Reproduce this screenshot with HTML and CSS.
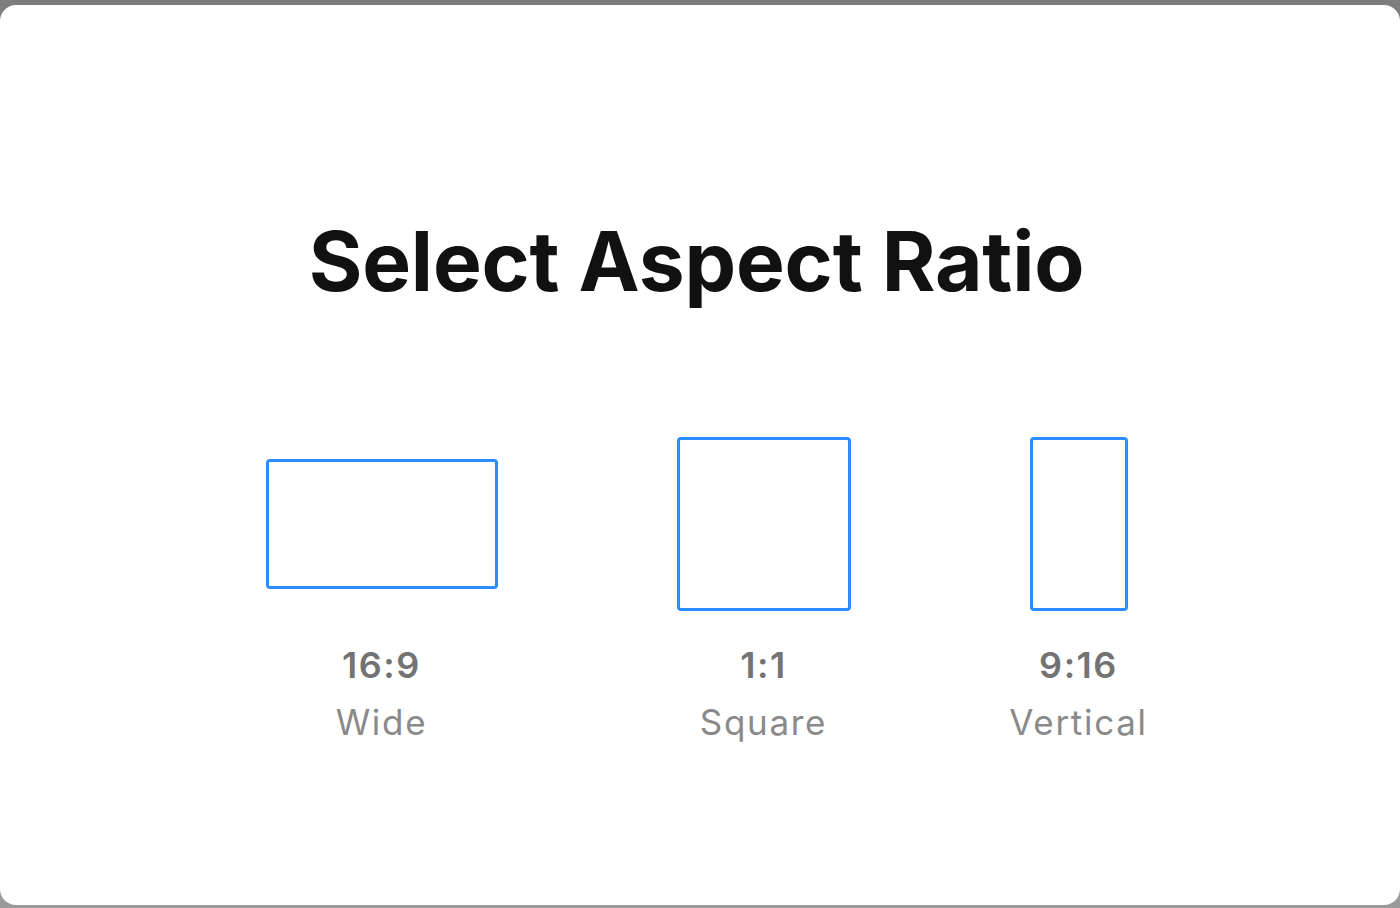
FILE: index.html
```html
<!DOCTYPE html>
<html lang="en">
<head>
    <meta charset="UTF-8">
    <meta name="viewport" content="width=device-width, initial-scale=1.0">
    <title>Select Aspect Ratio</title>
    <link rel="stylesheet" href="styles.css">
</head>
<body>

    <div class="modal">
        <h1>Select Aspect Ratio</h1>

        <div class="options">
            <!-- 16:9 -->
            <div class="option wide">
                <div class="frame"><div class="shape"></div></div>
                <div class="ratio">16:9</div>
                <div class="name">Wide</div>
            </div>

            <!-- 1:1 -->
            <div class="option square">
                <div class="frame"><div class="shape"></div></div>
                <div class="ratio">1:1</div>
                <div class="name">Square</div>
            </div>

            <!-- 9:16 -->
            <div class="option vertical">
                <div class="frame"><div class="shape"></div></div>
                <div class="ratio">9:16</div>
                <div class="name">Vertical</div>
            </div>
        </div>
    </div>

</body>
</html>
```

FILE: styles.css
```css
body {
    margin: 0;
    font-family: Inter, "Noto Sans", sans-serif;
    background: linear-gradient(#7d7d7d, #9a9a9a);
    height: 908px;
    overflow: hidden;
}

.modal {
    box-sizing: border-box;
    margin-top: 5px;
    height: 900px;
    background-color: #fff;
    border-radius: 16px;
    padding: 208px 7px 0 0;
    display: flex;
    flex-direction: column;
    align-items: center;
}

h1 {
    margin: 0;
    font-size: 82px;
    line-height: 98px;
    font-weight: 700;
    color: #111;
    letter-spacing: -0.2px;
}

.options {
    display: flex;
    gap: 179px;
    margin-top: 126px;
}

.option {
    display: flex;
    flex-direction: column;
    align-items: center;
    cursor: pointer;
}

.frame {
    height: 174px;
    display: flex;
    align-items: center;
}

.shape {
    box-sizing: border-box;
    border: 3px solid #2d8cff;
    border-radius: 4px;
}

.wide,
.wide .shape {
    width: 232px;
}

.wide .shape {
    height: 130px;
}

.square,
.square .shape {
    width: 174px;
}

.square .shape {
    height: 174px;
}

.vertical,
.vertical .shape {
    width: 98px;
}

.vertical .shape {
    height: 174px;
}

.ratio {
    margin-top: 33px;
    font-size: 36px;
    line-height: 43px;
    font-weight: 600;
    color: #737373;
    letter-spacing: 1.5px;
    white-space: nowrap;
}

.name {
    margin-top: 15px;
    font-size: 35px;
    line-height: 41px;
    color: #8a8a8a;
    letter-spacing: 1.7px;
    white-space: nowrap;
}
```
